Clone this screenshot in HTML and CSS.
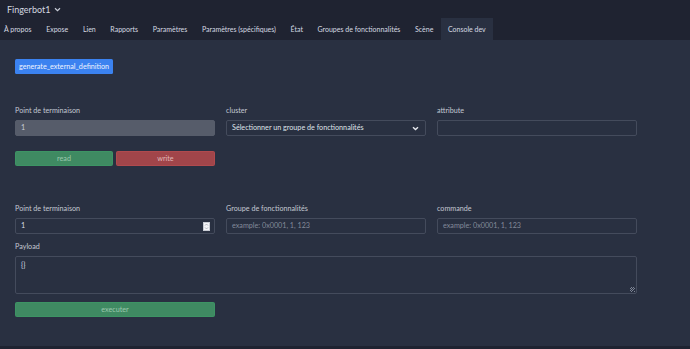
FILE: index.html
```html
<!DOCTYPE html>
<html lang="fr">
<head>
<meta charset="utf-8">
<title>Fingerbot1</title>
<link rel="stylesheet" href="styles.css">
</head>
<body>
<header class="topbar">
  <div class="title">Fingerbot1 <span class="chev"><svg width="7" height="5" viewBox="0 0 7 5"><path d="M1 1.2 L3.5 3.6 L6 1.2" fill="none" stroke="#c9ced8" stroke-width="1.2"/></svg></span></div>
  <nav class="tabs">
    <a class="tab">À propos</a>
    <a class="tab">Expose</a>
    <a class="tab">Lien</a>
    <a class="tab">Rapports</a>
    <a class="tab">Paramètres</a>
    <a class="tab">Paramètres (spécifiques)</a>
    <a class="tab">État</a>
    <a class="tab">Groupes de fonctionnalités</a>
    <a class="tab">Scène</a>
    <a class="tab active">Console dev</a>
  </nav>
</header>
<main class="content">
  <div class="top-action"><button class="btn btn-blue">generate_external_definition</button></div>

  <section class="block block-1">
    <div class="grid3">
      <div class="field">
        <label class="lbl">Point de terminaison</label>
        <div class="input disabled">1</div>
      </div>
      <div class="field">
        <label class="lbl">cluster</label>
        <div class="input select">Sélectionner un groupe de fonctionnalités
          <svg class="caret" width="7" height="5" viewBox="0 0 7 5"><path d="M1 1.2 L3.5 3.6 L6 1.2" fill="none" stroke="#e6e8ee" stroke-width="1.4"/></svg>
        </div>
      </div>
      <div class="field">
        <label class="lbl">attribute</label>
        <div class="input"></div>
      </div>
    </div>
    <div class="btn-row">
      <button class="btn btn-green">read</button>
      <button class="btn btn-red">write</button>
    </div>
  </section>

  <section class="block block-2">
    <div class="grid3">
      <div class="field">
        <label class="lbl">Point de terminaison</label>
        <div class="input number">1<span class="spin"><svg width="5" height="7" viewBox="0 0 5 7"><path d="M1 2.6 L2.5 1 L4 2.6 M1 4.4 L2.5 6 L4 4.4" fill="none" stroke="#9a9ea8" stroke-width="0.7"/></svg></span></div>
      </div>
      <div class="field">
        <label class="lbl">Groupe de fonctionnalités</label>
        <div class="input placeholder">example: 0x0001, 1, 123</div>
      </div>
      <div class="field">
        <label class="lbl">commande</label>
        <div class="input placeholder">example: 0x0001, 1, 123</div>
      </div>
    </div>
    <div class="field payload">
      <label class="lbl">Payload</label>
      <div class="textarea">{}<span class="grip"></span></div>
    </div>
    <div class="exec-row"><button class="btn btn-green">executer</button></div>
  </section>
</main>
<footer class="bottombar"></footer>
</body>
</html>
```

FILE: styles.css
```css
* { box-sizing: border-box; }
html, body { margin: 0; height: 100%; }
body {
  background: #293041;
  font-family: Lato, "Open Sans", sans-serif;
  color: #c9ced8;
  display: flex;
  flex-direction: column;
  width: 690px;
  height: 349px;
  overflow: hidden;
}
.topbar {
  background: #1f2331;
  height: 40px;
  flex: none;
}
.title {
  height: 18px;
  padding: 0 0 0 7px;
  font-size: 9px;
  line-height: 13px;
  color: #d4d8e0;
  display: flex;
  align-items: center;
  gap: 4px;
}
.chev { display: flex; align-items: center; }
.tabs {
  display: flex;
  height: 22px;
}
.tab {
  font-size: 7px;
  color: #d6dae2;
  padding: 0 7.3px 0 4px;
  line-height: 22px;
  white-space: nowrap;
}
.tab + .tab { padding-left: 7.3px; }
.tab.active { background: #293041; }
.content {
  flex: 1;
  padding: 19px 15px 0 15px;
}
.top-action { display: flex; }
.btn {
  font-family: inherit;
  border: 1px solid transparent;
  border-radius: 1.5px;
  height: 15px;
  font-size: 7.2px;
  padding: 0 6px;
  line-height: 13px;
  cursor: pointer;
  white-space: nowrap;
}
.btn-blue {
  background: #3b82f0;
  color: #eef3ff;
  width: 98px;
  padding: 0;
}
.btn-green {
  background: #3f8a62;
  border-color: #3d9464;
  color: #9cc8ae;
}
.btn-red {
  background: #a1454a;
  border-color: #b04a4e;
  color: #e0b8ba;
}
.block-1 { margin-top: 32px; }
.grid3 {
  display: grid;
  grid-template-columns: 200px 200px 200px;
  column-gap: 11px;
}
.field { display: flex; flex-direction: column; }
.lbl {
  font-size: 7.2px;
  line-height: 10px;
  color: #c3c8d2;
  margin-bottom: 4px;
}
.input {
  height: 16px;
  border: 1px solid #444b5c;
  border-radius: 2px;
  background: #293041;
  font-size: 7.2px;
  line-height: 14px;
  padding: 0 5px;
  color: #d8dce4;
  position: relative;
  white-space: nowrap;
}
.input.disabled {
  background: #565c6a;
  border-color: #565c6a;
  color: #c9ced8;
}
.input.select { color: #dfe2e8; }
.caret {
  position: absolute;
  right: 6px;
  top: 5px;
}
.input.placeholder { color: #838a9a; }
.input.number { padding-right: 14px; }
.spin {
  position: absolute;
  right: 4px;
  top: 3px;
  width: 7px;
  height: 9px;
  background: #f4f5f8;
  border: 1px solid #c8ccd4;
  display: flex;
  align-items: center;
  justify-content: center;
}
.btn-row {
  display: grid;
  grid-template-columns: 98px 99px;
  column-gap: 3px;
  margin-top: 15px;
}
.block-2 { margin-top: 38px; }
.payload { margin-top: 8px; width: 622px; }
.textarea {
  height: 38px;
  border: 1px solid #444b5c;
  border-radius: 2px;
  font-size: 7.2px;
  line-height: 10px;
  padding: 4px 5px;
  color: #d8dce4;
  position: relative;
}
.grip {
  position: absolute;
  right: 1px;
  bottom: 1px;
  width: 5px;
  height: 5px;
  background: repeating-linear-gradient(135deg, transparent 0 1px, #7d8494 1px 1.6px);
}
.exec-row {
  display: grid;
  grid-template-columns: 200px;
  margin-top: 8px;
}
.bottombar {
  height: 3px;
  background: #1f2331;
  flex: none;
}
```
